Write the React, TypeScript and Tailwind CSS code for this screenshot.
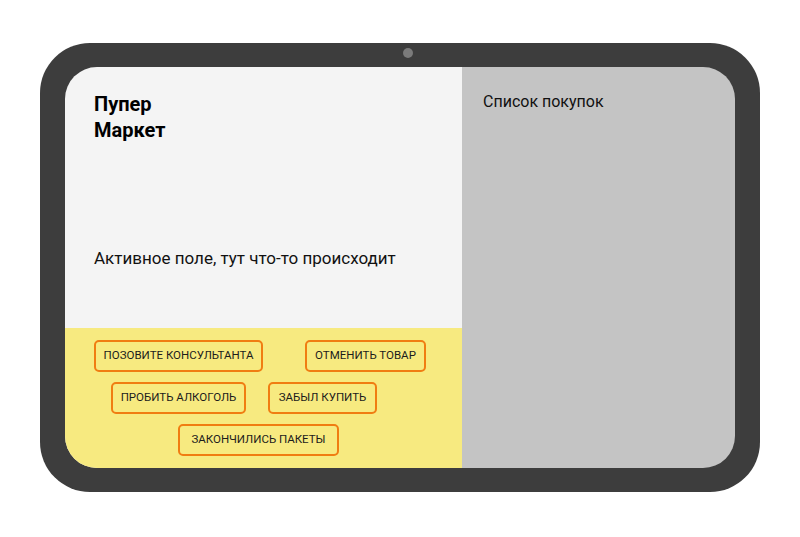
export default function App() {
  return (
    <div className="min-h-screen bg-white pt-[43px]" style={{ fontFamily: "Roboto, 'Noto Sans', sans-serif" }}>
      <div className="relative mx-auto w-[720px] h-[449px] rounded-[50px] bg-[#3d3d3d] px-[25px] py-[24px]">
        <div className="absolute left-[363px] top-[5px] h-[10px] w-[10px] rounded-full bg-[#7b7b7b]" />
        <div className="flex h-full w-full overflow-hidden rounded-[32px]">
          <div className="flex w-[397px] flex-col bg-[#f4f4f4]">
            <div className="flex-1 pl-[29px] pt-[24px]">
              <h1 className="text-[20px] font-bold leading-[26px] text-black">
                Пупер
                <br />
                Маркет
              </h1>
              <p className="mt-[103px] text-[17px] leading-[24px] text-[#111]">Активное поле, тут что-то происходит</p>
            </div>
            <div className="flex h-[140px] flex-col gap-[10px] bg-[#f7ea80] pt-[12px]">
              <div className="flex gap-[42px] pl-[29px]">
                <ActionButton label="Позовите консультанта" width="w-[169px]" />
                <ActionButton label="Отменить товар" width="w-[121px]" />
              </div>
              <div className="flex gap-[22px] pl-[46px]">
                <ActionButton label="Пробить алкоголь" width="w-[135px]" />
                <ActionButton label="Забыл купить" width="w-[109px]" />
              </div>
              <div className="flex pl-[113px]">
                <ActionButton label="Закончились пакеты" width="w-[161px]" />
              </div>
            </div>
          </div>
          <div className="flex-1 bg-[#c4c4c4] pl-[21px] pt-[23px]">
            <h2 className="text-[16px] leading-[24px] text-[#111]">Список покупок</h2>
          </div>
        </div>
      </div>
    </div>
  );
}

function ActionButton({ label, width }: { label: string; width: string }) {
  return (
    <button
      className={`${width} h-[32px] rounded-[5px] border-2 border-[#f07d12] text-[11.5px] uppercase leading-none text-[#1c1c1c]`}
    >
      {label}
    </button>
  );
}
